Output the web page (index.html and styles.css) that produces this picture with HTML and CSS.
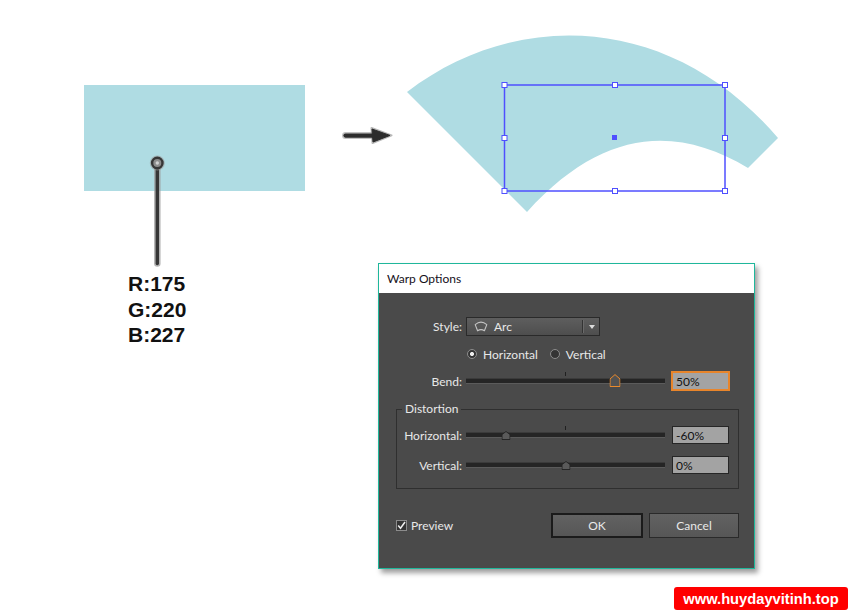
FILE: index.html
```html
<!DOCTYPE html>
<html lang="en">
<head>
<meta charset="utf-8">
<title>Warp Options</title>
<link rel="stylesheet" href="styles.css">
</head>
<body>
<div class="stage">
  <div class="swatch-block">
    <div class="swatch"></div>
    <svg class="pin" width="20" height="120" viewBox="148 153 20 120">
      <line x1="157.3" y1="168" x2="157.3" y2="263.5" stroke="#9c9c9c" stroke-width="6.5" stroke-linecap="round" opacity="0.75"/>
      <line x1="157.3" y1="168" x2="157.3" y2="263.5" stroke="#363636" stroke-width="3.4" stroke-linecap="round"/>
      <circle cx="157.3" cy="163" r="7.5" fill="#9a9a9a" opacity="0.6"/>
      <circle cx="157.3" cy="163" r="5.2" fill="#8c8c8c" stroke="#363636" stroke-width="2.4"/>
      <circle cx="157.3" cy="163" r="1.7" fill="#d0d0d0"/>
    </svg>
    <div class="rgb">
      <div>R:175</div>
      <div>G:220</div>
      <div>B:227</div>
    </div>
  </div>

  <svg class="arrow" width="56" height="24" viewBox="340 124 56 24">
    <line x1="345.5" y1="135.6" x2="374" y2="135.6" stroke="#9a9a9a" stroke-width="7" stroke-linecap="round" opacity="0.6"/>
    <polygon points="371.5,128 391.5,135.4 372.5,143" fill="#8a8a8a" stroke="#9a9a9a" stroke-width="2" stroke-linejoin="round" opacity="0.7"/>
    <line x1="345.5" y1="135.6" x2="374" y2="135.6" stroke="#2c2c2c" stroke-width="4.2" stroke-linecap="round"/>
    <polygon points="372,129 390,135.4 373,142" fill="#2c2c2c" stroke="#2c2c2c" stroke-width="1" stroke-linejoin="round"/>
  </svg>

  <svg class="warp-art" width="385" height="190" viewBox="400 30 385 190">
    <path d="M407,92 C515,9 670,12 778,138 L748,168 C678,126 604,127 527,212 Z" fill="#afdce3"/>
    <rect x="504.5" y="85" width="220.5" height="106" fill="none" stroke="#4f4fff" stroke-width="1.5"/>
    <g fill="#ffffff" stroke="#4f4fff" stroke-width="1">
      <rect x="502" y="82.5" width="5" height="5"/>
      <rect x="612.5" y="82.5" width="5" height="5"/>
      <rect x="722.5" y="82.5" width="5" height="5"/>
      <rect x="502" y="135.5" width="5" height="5"/>
      <rect x="722.5" y="135.5" width="5" height="5"/>
      <rect x="502" y="188.5" width="5" height="5"/>
      <rect x="612.5" y="188.5" width="5" height="5"/>
      <rect x="722.5" y="188.5" width="5" height="5"/>
    </g>
    <rect x="612" y="135" width="5" height="5" fill="#4f4fff"/>
  </svg>

  <div class="dialog">
    <div class="titlebar">Warp Options</div>
    <div class="dialog-body">
      <div class="row row-style">
        <span class="label">Style:</span>
        <div class="select">
          <svg class="select-icon" width="14" height="11" viewBox="0 0 14 11">
            <path d="M1.2,3.6 Q7,-1.4 12.8,3.6 L10.4,9.8 Q7,7.4 3.6,9.8 Z" fill="none" stroke="#c4c4c4" stroke-width="1.1" stroke-linejoin="round"/>
          </svg>
          <span class="select-text">Arc</span>
          <span class="select-sep"></span>
          <span class="select-caret"></span>
        </div>
      </div>

      <div class="row row-radio">
        <span class="radio"><span class="radio-dot checked"></span>Horizontal</span>
        <span class="radio radio-second"><span class="radio-dot"></span>Vertical</span>
      </div>

      <div class="row row-bend">
        <span class="label">Bend:</span>
        <div class="slider">
          <span class="tick"></span>
          <span class="thumb thumb-focus" style="left:75%">
            <svg width="11" height="13" viewBox="0 0 11 13"><polygon points="0.5,5 5.5,0.6 10.5,5 10.5,12.5 0.5,12.5" fill="#525252" stroke="#ea8a2c" stroke-width="1"/></svg>
          </span>
        </div>
        <div class="value value-focus">50%</div>
      </div>

      <div class="group">
        <div class="group-title">Distortion</div>
        <div class="row group-row first">
          <span class="label label-inner">Horizontal:</span>
          <div class="slider">
            <span class="tick"></span>
            <span class="thumb" style="left:20%">
              <svg width="9" height="9" viewBox="0 0 9 9"><polygon points="0.5,3.5 4.5,0.5 8.5,3.5 8.5,8.5 0.5,8.5" fill="#5a5a5a" stroke="#252525" stroke-width="1"/></svg>
            </span>
          </div>
          <div class="value">-60%</div>
        </div>
        <div class="row group-row second">
          <span class="label label-inner">Vertical:</span>
          <div class="slider">
            <span class="thumb" style="left:50%">
              <svg width="9" height="9" viewBox="0 0 9 9"><polygon points="0.5,3.5 4.5,0.5 8.5,3.5 8.5,8.5 0.5,8.5" fill="#5a5a5a" stroke="#252525" stroke-width="1"/></svg>
            </span>
          </div>
          <div class="value">0%</div>
        </div>
      </div>

      <div class="row row-actions">
        <span class="check">
          <span class="check-box">
            <svg width="9" height="9" viewBox="0 0 9 9"><polyline points="1.2,4.6 3.5,7.2 8,1" fill="none" stroke="#f0f0f0" stroke-width="1.5"/></svg>
          </span>Preview
        </span>
        <div class="buttons">
          <button class="btn btn-default" type="button">OK</button>
          <button class="btn btn-cancel" type="button">Cancel</button>
        </div>
      </div>
    </div>
  </div>

  <div class="watermark">www.huydayvitinh.top</div>
</div>
</body>
</html>
```

FILE: styles.css
```css
html, body {
  margin: 0;
  padding: 0;
  background: #ffffff;
}

body {
  overflow: hidden;
}

.stage {
  position: relative;
  width: 850px;
  height: 612px;
  background: #ffffff;
}

/* left swatch */
.swatch-block {
  position: absolute;
  left: 84px;
  top: 85px;
  display: flex;
  flex-direction: column;
}

.swatch {
  width: 221px;
  height: 106px;
  background: #afdce3;
}

.pin {
  position: absolute;
  left: 64px;
  top: 68px;
}

.rgb {
  margin: 80px 0 0 44px;
  font-family: "Liberation Sans", Arial, sans-serif;
  font-weight: bold;
  font-size: 21px;
  line-height: 25.5px;
  color: #111111;
}

.arrow {
  position: absolute;
  left: 340px;
  top: 124px;
}

.warp-art {
  position: absolute;
  left: 400px;
  top: 30px;
}

/* dialog */
.dialog {
  position: absolute;
  left: 378px;
  top: 263px;
  width: 377px;
  height: 306px;
  box-sizing: border-box;
  border: 1px solid #1fb79b;
  background: #4a4a4a;
  box-shadow: 3px 4px 5px rgba(0, 0, 0, 0.38);
  display: flex;
  flex-direction: column;
  font-family: Lato, "Liberation Sans", sans-serif;
  font-size: 12px;
  color: #e8e8e8;
}

.titlebar {
  height: 29px;
  flex: none;
  background: #ffffff;
  color: #15101a;
  padding-left: 8px;
  display: flex;
  align-items: center;
}

.dialog-body {
  flex: 1;
  padding-top: 24px;
  display: flex;
  flex-direction: column;
}

.row {
  display: flex;
  align-items: center;
}

.label {
  width: 87px;
  box-sizing: border-box;
  padding-right: 4px;
  text-align: right;
  flex: none;
}

.label-inner {
  width: 69px;
}

/* style select */
.row-style {
  height: 19px;
}

.select {
  width: 134px;
  height: 19px;
  box-sizing: border-box;
  border: 1px solid #2a2a2a;
  background: linear-gradient(#5e5e5e, #4e4e4e);
  display: flex;
  align-items: center;
  padding-left: 7px;
}

.select-icon {
  flex: none;
  display: block;
}

.select-text {
  margin-left: 6px;
}

.select-sep {
  margin-left: auto;
  width: 1px;
  height: 13px;
  background: #333333;
  border-right: 1px solid #6a6a6a;
}

.select-caret {
  margin: 0 4px 0 5px;
  width: 0;
  height: 0;
  border-left: 3.5px solid transparent;
  border-right: 3.5px solid transparent;
  border-top: 4px solid #dcdcdc;
}

/* radios */
.row-radio {
  margin-top: 11px;
  height: 14px;
  padding-left: 88px;
}

.radio {
  display: flex;
  align-items: center;
}

.radio-second {
  margin-left: 12px;
}

.radio-dot {
  width: 10px;
  height: 10px;
  box-sizing: border-box;
  border-radius: 50%;
  border: 1px solid #8c8c8c;
  background: #343434;
  margin-right: 6px;
}

.radio-dot.checked {
  background: radial-gradient(circle, #ececec 0, #ececec 1.6px, #343434 2.4px);
}

/* sliders */
.row-bend {
  margin-top: 10px;
  height: 20px;
}

.slider {
  position: relative;
  width: 199px;
  height: 4px;
  background: #252525;
  box-shadow: 0 1px 0 #5b5b5b, 0 -1px 0 #3b3b3b;
  flex: none;
}

.tick {
  position: absolute;
  left: 99px;
  top: -7px;
  width: 1px;
  height: 4px;
  background: #202020;
}

.thumb {
  position: absolute;
  top: -2px;
  transform: translateX(-50%);
  display: block;
  line-height: 0;
}

.thumb-focus {
  top: -5px;
}

.value {
  margin-left: 7px;
  width: 57px;
  height: 18px;
  box-sizing: border-box;
  border: 1px solid #262626;
  background: #a3a3a3;
  color: #111111;
  padding-left: 3px;
  display: flex;
  align-items: center;
}

.value-focus {
  margin-left: 6px;
  width: 59px;
  height: 20px;
  border: 2px solid #e8852b;
}

/* distortion group */
.group {
  margin: 18px 0 0 17px;
  width: 343px;
  box-sizing: border-box;
  border: 1px solid #2f2f2f;
  padding-bottom: 14px;
}

.group-title {
  width: fit-content;
  margin: -8px 0 0 5px;
  padding: 0 3px;
  line-height: 14px;
  background: #4a4a4a;
}

.group-row {
  height: 18px;
}

.group-row.first {
  margin-top: 10px;
}

.group-row.second {
  margin-top: 12px;
}

/* actions */
.row-actions {
  margin-top: 24px;
  height: 25px;
  padding: 0 15px 0 17px;
}

.check {
  display: flex;
  align-items: center;
}

.check-box {
  width: 11px;
  height: 11px;
  box-sizing: border-box;
  border: 1px solid #8c8c8c;
  background: #333333;
  margin-right: 4px;
  display: flex;
  align-items: center;
  justify-content: center;
}

.check-box svg {
  display: block;
}

.buttons {
  margin-left: auto;
  display: flex;
  gap: 6px;
}

.btn {
  height: 25px;
  box-sizing: border-box;
  padding: 0;
  font-family: Lato, "Liberation Sans", sans-serif;
  font-size: 12px;
  color: #e8e8e8;
  background: linear-gradient(#626262, #565656);
  border: 1px solid #2a2a2a;
}

.btn-default {
  width: 92px;
  border: 2px solid #1b1b1b;
}

.btn-cancel {
  width: 90px;
}

/* watermark */
.watermark {
  position: absolute;
  left: 674px;
  top: 587px;
  width: 174px;
  height: 23px;
  border-radius: 3px;
  background: #ff0000;
  color: #ffffff;
  font-family: "Liberation Sans", Arial, sans-serif;
  font-weight: bold;
  font-size: 14.7px;
  display: flex;
  align-items: center;
  justify-content: center;
}
```
